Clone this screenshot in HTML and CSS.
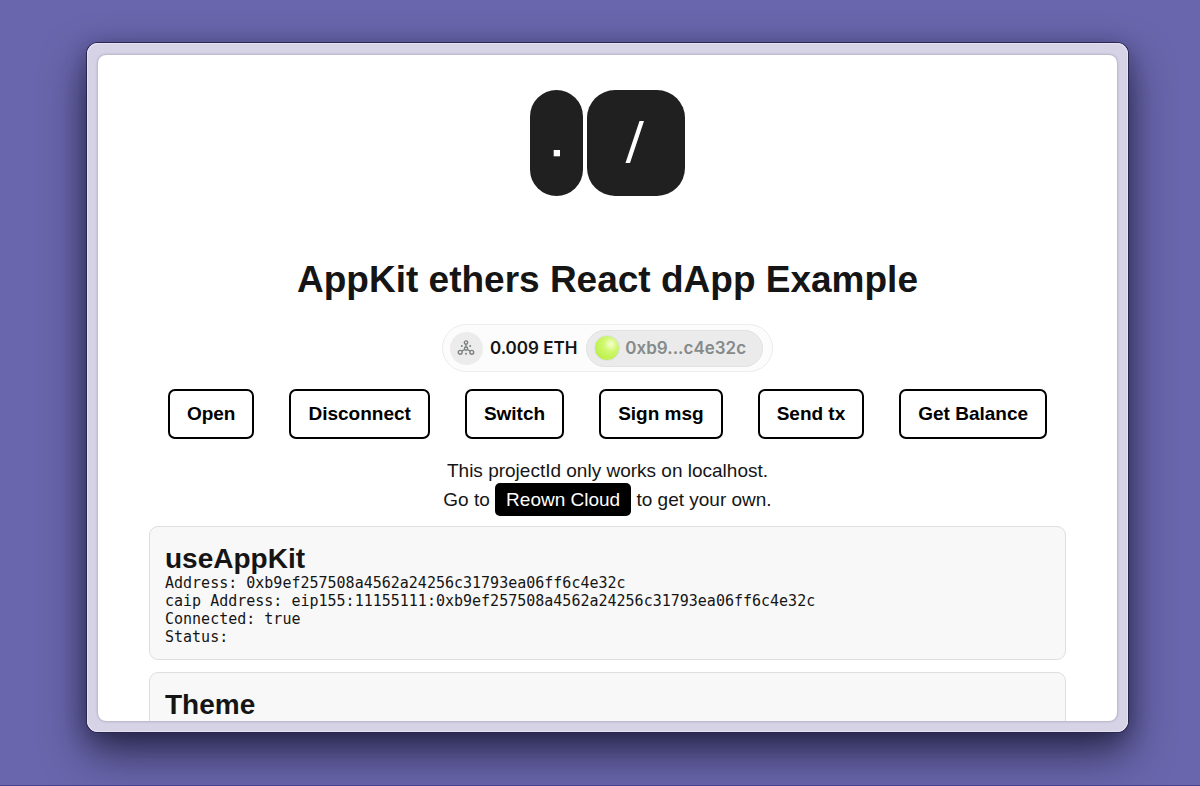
FILE: index.html
```html
<!DOCTYPE html>
<html lang="en">
<head>
<meta charset="utf-8">
<title>AppKit ethers React dApp Example</title>
<link rel="stylesheet" href="styles.css">
</head>
<body>
<div class="frame">
<main class="page">
  <svg class="logo" viewBox="0 0 155 106" role="img" aria-label="Reown">
    <rect width="53" height="106" rx="26.5" fill="#202020"/>
    <rect x="57" width="98" height="106" rx="28" fill="#202020"/>
    <rect x="23.7" y="60" width="6.3" height="6.3" fill="#fff"/>
    <path d="M109.5 31h4.5L100 73h-4.5z" fill="#fff"/>
  </svg>
  <h1 class="title">AppKit ethers React dApp Example</h1>
  <button class="account" type="button">
    <span class="network">
      <svg viewBox="0 0 18 16" width="18" height="16" fill="none" stroke="#7c8181" stroke-width="1.4" aria-hidden="true">
        <circle cx="9" cy="2.6" r="1.7"/><circle cx="9" cy="8.6" r="1.6"/><circle cx="3.2" cy="12.3" r="1.9"/><circle cx="14.8" cy="12.3" r="1.9"/>
        <path d="M9 4.3V7M7.6 9.5 4.9 11.2M10.4 9.5l2.7 1.7"/>
        <g fill="#7c8181" stroke="none"><circle cx="4.8" cy="6" r="1"/><circle cx="13.2" cy="6" r="1"/><circle cx="9" cy="13.8" r="1"/></g>
      </svg>
    </span>
    <span class="balance">0.009 ETH</span>
    <span class="address"><span class="avatar"></span>0xb9...c4e32c</span>
  </button>
  <div class="actions">
    <button type="button">Open</button>
    <button type="button">Disconnect</button>
    <button type="button">Switch</button>
    <button type="button">Sign msg</button>
    <button type="button">Send tx</button>
    <button type="button">Get Balance</button>
  </div>
  <p class="advice">This projectId only works on localhost.<br>Go to <a class="cloud" href="#">Reown Cloud</a> to get your own.</p>
  <section class="card">
    <h2>useAppKit</h2>
    <pre>Address: 0xb9ef257508a4562a24256c31793ea06ff6c4e32c
caip Address: eip155:11155111:0xb9ef257508a4562a24256c31793ea06ff6c4e32c
Connected: true
Status: </pre>
  </section>
  <section class="card">
    <h2>Theme</h2>
  </section>
</main>
</div>
</body>
</html>
```
FILE: styles.css
```css
* { box-sizing: border-box; }
body {
  margin: 0;
  height: 100vh;
  display: flex;
  padding: 43px 72px 53px 87px;
  background: #6a66ad;
  color: #151515;
  font-family: "Liberation Sans", Arial, sans-serif;
  border-bottom: 1px solid #47438b;
}
.frame {
  flex: 1;
  min-width: 0;
  display: flex;
  padding: 12px 11px 11px;
  border-radius: 11px;
  background: #d7d3e6;
  box-shadow: inset 0 0 0 1px #e6e2f3, 0 0 0 1px #29264f, 0 20px 44px rgba(15, 15, 35, .7), 0 4px 20px rgba(20, 20, 50, .35);
}
.page {
  flex: 1;
  min-width: 0;
  overflow: hidden;
  display: flex;
  flex-direction: column;
  align-items: center;
  padding: 35px 51px 0;
  border-radius: 8px;
  background: #fff;
  box-shadow: 0 0 3px rgba(50, 45, 80, .4);
}
.page > * { flex-shrink: 0; }
.logo { width: 155px; height: 106px; }
.title { margin: 60px 0 0; font-size: 37px; line-height: 48px; }
.account {
  display: flex;
  align-items: center;
  height: 48px;
  margin-top: 20px;
  padding: 0 9px 0 7px;
  border: 1px solid #ececec;
  border-radius: 24px;
  background: #fcfcfc;
  color: #141414;
  font: 600 17px Inter, sans-serif;
}
.network {
  display: grid;
  place-items: center;
  width: 33px;
  height: 33px;
  margin-right: 7px;
  border-radius: 50%;
  background: #ececec;
}
.address {
  display: flex;
  align-items: center;
  gap: 5px;
  height: 37px;
  margin-left: 9px;
  padding: 0 16px 0 7px;
  border: 1px solid #e1e1e1;
  border-radius: 19px;
  background: #ebebeb;
  color: #858a8a;
}
.avatar {
  width: 26px;
  height: 26px;
  border: 1px solid #dce0e8;
  border-radius: 50%;
  background: radial-gradient(circle at 66% 34%, #f6ffd0 0%, #d0f870 32%, #bdf04a 75%);
}
.actions { display: flex; gap: 35px; margin-top: 17px; }
.actions button {
  height: 50px;
  padding: 0 17px;
  border: 2px solid #000;
  border-radius: 7px;
  background: #fff;
  color: #000;
  font: bold 19px "Liberation Sans", Arial, sans-serif;
}
.advice { margin: 17px 0 0; font-size: 19px; line-height: 29px; text-align: center; }
.cloud {
  padding: 6px 11px;
  border-radius: 5px;
  background: #000;
  color: #fff;
  text-decoration: none;
}
.card {
  align-self: stretch;
  min-height: 134px;
  margin-top: 12px;
  padding: 16px 15px 13px;
  border: 1px solid #dedede;
  border-radius: 9px;
  background: #f8f8f8;
}
.card h2 { margin: 0; font-size: 28px; line-height: 31px; }
.card pre { margin: 0; font: 15px/18px "DejaVu Sans Mono", monospace; }
```
